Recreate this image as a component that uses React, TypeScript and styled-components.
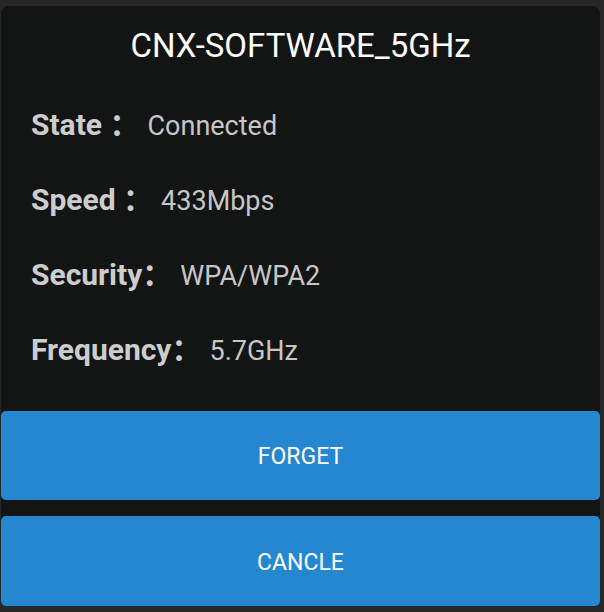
import React from "react";
import styled, { createGlobalStyle } from "styled-components";

const GlobalStyle = createGlobalStyle`
  html, body {
    margin: 0;
    padding: 0;
    background: #272727;
  }
  body {
    font-family: Roboto, "Noto Sans CJK SC", sans-serif;
  }
`;

const Screen = styled.div`
  width: 604px;
  height: 612px;
  box-sizing: border-box;
  padding: 6px 4px 6px 1px;
  display: flex;
`;

const Dialog = styled.div`
  flex: 1;
  display: flex;
  flex-direction: column;
  background: #131414;
  border-radius: 8px;
  padding-top: 21px;
`;

const Title = styled.h1`
  margin: 0;
  font-family: Roboto, sans-serif;
  font-weight: 400;
  font-size: 33px;
  line-height: 38px;
  color: #ffffff;
  text-align: center;
`;

const InfoList = styled.div`
  margin-top: 44px;
  padding-left: 30px;
  display: flex;
  flex-direction: column;
  gap: 43px;
`;

const Row = styled.div`
  display: flex;
  align-items: baseline;
  height: 32px;
  line-height: 32px;
  overflow: visible;
`;

const Label = styled.span`
  font-family: Roboto, "Noto Sans CJK SC", sans-serif;
  font-weight: 700;
  font-size: 30px;
  color: #cdcdcd;
  white-space: pre;
`;

const Value = styled.span`
  margin-left: 8px;
  font-family: Roboto, sans-serif;
  font-weight: 400;
  font-size: 27px;
  color: #c6c6c6;
`;

const Actions = styled.div`
  margin-top: auto;
  display: flex;
  flex-direction: column;
  gap: 16px;
`;

const ActionButton = styled.button<{ $h: number }>`
  height: ${(p) => p.$h}px;
  border: none;
  border-radius: 5px;
  background: #2587d0;
  color: #ffffff;
  font-family: Roboto, sans-serif;
  font-size: 23px;
  font-weight: 400;
  cursor: pointer;
  padding: 2px 0 0;
`;

const rows = [
  { label: "State ：", value: "Connected" },
  { label: "Speed ：", value: "433Mbps" },
  { label: "Security：", value: "WPA/WPA2" },
  { label: "Frequency：", value: "5.7GHz" },
];

export default function App() {
  return (
    <>
      <GlobalStyle />
      <Screen>
        <Dialog>
          <Title>CNX-SOFTWARE_5GHz</Title>
          <InfoList>
            {rows.map((r) => (
              <Row key={r.label}>
                <Label>{r.label}</Label>
                <Value>{r.value}</Value>
              </Row>
            ))}
          </InfoList>
          <Actions>
            <ActionButton $h={89}>FORGET</ActionButton>
            <ActionButton $h={90}>CANCLE</ActionButton>
          </Actions>
        </Dialog>
      </Screen>
    </>
  );
}
